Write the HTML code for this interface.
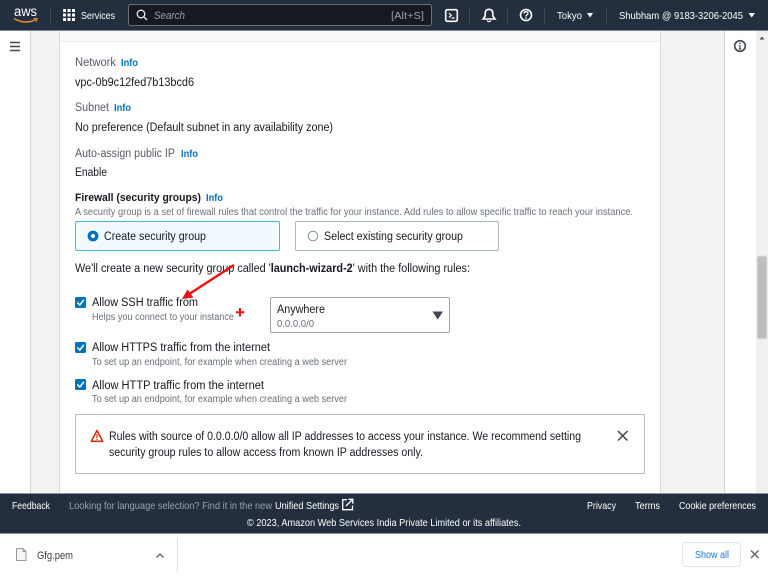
<!DOCTYPE html>
<html lang="en"><head><meta charset="utf-8"><title>EC2 Launch</title>
<style>
html,body{margin:0;padding:0;width:768px;height:576px;overflow:hidden;background:#fff}
svg{display:block;filter:blur(0.3px)}
text{font-family:"Liberation Sans",sans-serif;font-size:11.500px;fill:#16191f;white-space:pre}
.l{fill:#545b64}
.i{fill:#0073bb;font-weight:bold;font-size:10px}
.s{font-size:10px;fill:#687078}
.w{fill:#fff}
.f{fill:#fff;font-size:10.500px}
</style></head><body>
<svg width="768" height="576" viewBox="0 0 768 576" xmlns="http://www.w3.org/2000/svg">
<!-- page layout -->
<rect x="0" y="31" width="768" height="463" fill="#fff"/>
<rect x="30" y="31" width="30" height="463" fill="#f2f3f3"/>
<rect x="30" y="31" width="1" height="463" fill="#cfd3d3"/>
<rect x="59" y="31" width="1" height="463" fill="#d8dcdc"/>
<rect x="60" y="31" width="600" height="10" fill="#fafafa"/>
<rect x="60" y="41" width="600" height="1" fill="#eaeded"/>
<rect x="660" y="31" width="65" height="463" fill="#f2f3f3"/>
<rect x="660" y="31" width="1" height="463" fill="#d8dcdc"/>
<rect x="724" y="31" width="1" height="463" fill="#cfd3d3"/>
<rect x="756" y="31" width="12" height="463" fill="#f1f1f1"/>
<rect x="757" y="256" width="10" height="83" fill="#bdbdbd" stroke="#e2e2e2"/>
<path d="M759.500 39.500L762 36.500L764.500 39.500Z" fill="#505050"/>
<!-- hamburger -->
<path d="M10 42.500H20M10 46.500H20M10 50.500H20" stroke="#414750" stroke-width="1.500" fill="none"/>
<!-- right info -->
<circle cx="740" cy="46" r="5.300" fill="none" stroke="#414750" stroke-width="1.600"/>
<path d="M740 45.500V49M738.800 49H741.200M739 45.500H740" stroke="#414750" stroke-width="1.200" fill="none"/>
<rect x="739.300" y="42.500" width="1.400" height="1.400" fill="#414750"/>
<!-- top nav -->
<rect x="0" y="0" width="768" height="30" fill="#232f3e"/>
<rect x="0" y="30" width="768" height="1" fill="#7f8689"/>
<text x="14" y="16" textLength="23" lengthAdjust="spacingAndGlyphs" class="w" style="font-size:13.500px">aws</text>
<path d="M14 18.500Q25 25 36 19.500" stroke="#ec912d" stroke-width="1.500" fill="none"/>
<path d="M33.500 18.600L37.200 18.500L36 22" stroke="#ec912d" stroke-width="1" fill="none"/>
<rect x="50" y="6" width="1" height="18" fill="#3a4654"/>
<g fill="#fff">
<rect x="63" y="9" width="3" height="3"/><rect x="67.500" y="9" width="3" height="3"/><rect x="72" y="9" width="3" height="3"/>
<rect x="63" y="13.500" width="3" height="3"/><rect x="67.500" y="13.500" width="3" height="3"/><rect x="72" y="13.500" width="3" height="3"/>
<rect x="63" y="18" width="3" height="3"/><rect x="67.500" y="18" width="3" height="3"/><rect x="72" y="18" width="3" height="3"/>
</g>
<text x="81" y="19" textLength="34" lengthAdjust="spacingAndGlyphs" class="f">Services</text>
<rect x="128.500" y="4.500" width="303" height="21" rx="2" fill="#16191f" stroke="#687078"/>
<circle cx="141" cy="14" r="3.800" fill="none" stroke="#eaeded" stroke-width="1.300"/>
<path d="M144 17L147 20" stroke="#eaeded" stroke-width="1.300"/>
<text x="154" y="19" textLength="31" lengthAdjust="spacingAndGlyphs" style="font-style:italic;fill:#95a5a6;font-size:11px">Search</text>
<text x="391" y="19" textLength="33" lengthAdjust="spacingAndGlyphs" style="fill:#95a5a6;font-size:10.500px">[Alt+S]</text>
<rect x="445.700" y="9.700" width="11.600" height="11.600" rx="1.500" fill="none" stroke="#fff" stroke-width="1.600"/>
<path d="M449 13L451.300 15.200L449 17.400M451.500 18H454.500" stroke="#fff" stroke-width="1.200" fill="none"/>
<rect x="469" y="7" width="1" height="17" fill="#3a4654"/>
<path d="M483 19H495L492.800 16V13.500Q492.800 9.300 489 9.300Q485.200 9.300 485.200 13.500V16Z" fill="none" stroke="#fff" stroke-width="1.600"/>
<path d="M487 20.500Q489 22.800 491 20.500" fill="none" stroke="#fff" stroke-width="1.200"/>
<rect x="507" y="7" width="1" height="17" fill="#3a4654"/>
<circle cx="526" cy="15" r="5.500" fill="none" stroke="#fff" stroke-width="1.600"/>
<path d="M524 13.500Q524 11.700 526 11.700Q528 11.700 528 13.300Q528 14.300 526.800 14.900Q526 15.300 526 16.500" fill="none" stroke="#fff" stroke-width="1.300"/>
<rect x="525.300" y="17.300" width="1.400" height="1.400" fill="#fff"/>
<rect x="544" y="7" width="1" height="17" fill="#3a4654"/>
<text x="557" y="19" textLength="25" lengthAdjust="spacingAndGlyphs" class="f">Tokyo</text>
<path d="M587 13H593L590 17.500Z" fill="#fff"/>
<rect x="606" y="7" width="1" height="17" fill="#3a4654"/>
<text x="619" y="19" textLength="124" lengthAdjust="spacingAndGlyphs" class="f">Shubham @ 9183-3206-2045</text>
<path d="M748.500 13H755L751.700 17.500Z" fill="#fff"/>
<!-- details -->
<text x="75" y="66" textLength="41" lengthAdjust="spacingAndGlyphs" class="l">Network</text>
<text x="121" y="66" textLength="17" lengthAdjust="spacingAndGlyphs" class="i">Info</text>
<text x="75" y="86" textLength="119" lengthAdjust="spacingAndGlyphs">vpc-0b9c12fed7b13bcd6</text>
<text x="75" y="111" textLength="34" lengthAdjust="spacingAndGlyphs" class="l">Subnet</text>
<text x="114" y="111" textLength="17" lengthAdjust="spacingAndGlyphs" class="i">Info</text>
<text x="75" y="131" textLength="258" lengthAdjust="spacingAndGlyphs">No preference (Default subnet in any availability zone)</text>
<text x="75" y="157" textLength="100" lengthAdjust="spacingAndGlyphs" class="l">Auto-assign public IP</text>
<text x="181" y="157" textLength="17" lengthAdjust="spacingAndGlyphs" class="i">Info</text>
<text x="75" y="176" textLength="32" lengthAdjust="spacingAndGlyphs">Enable</text>
<text x="75" y="201" textLength="126" lengthAdjust="spacingAndGlyphs" style="font-weight:bold;font-size:11px">Firewall (security groups)</text>
<text x="206" y="201" textLength="17" lengthAdjust="spacingAndGlyphs" class="i">Info</text>
<text x="75" y="215" textLength="558" lengthAdjust="spacingAndGlyphs" class="s">A security group is a set of firewall rules that control the traffic for your instance. Add rules to allow specific traffic to reach your instance.</text>
<rect x="75.500" y="221.500" width="204" height="29" rx="1.500" fill="#f1faff" stroke="#44b9d6"/>
<circle cx="93" cy="236" r="3.700" fill="#fff" stroke="#0073bb" stroke-width="3.400"/>
<text x="104" y="240" textLength="102" lengthAdjust="spacingAndGlyphs">Create security group</text>
<rect x="295.500" y="221.500" width="203" height="29" rx="1.500" fill="#fff" stroke="#aab7b8"/>
<circle cx="313" cy="236" r="4.800" fill="#fff" stroke="#879596"/>
<text x="324" y="240" textLength="139" lengthAdjust="spacingAndGlyphs">Select existing security group</text>
<text x="75" y="272" textLength="395" lengthAdjust="spacingAndGlyphs">We'll create a new security group called '<tspan style="font-weight:bold">launch-wizard-2</tspan>' with the following rules:</text>
<!-- checkboxes -->
<rect x="75" y="297" width="11" height="11" rx="1.500" fill="#0073bb"/>
<path d="M77.300 302.500L79.800 305L83.800 299.800" stroke="#fff" stroke-width="1.500" fill="none"/>
<text x="92" y="306" textLength="106" lengthAdjust="spacingAndGlyphs">Allow SSH traffic from</text>
<text x="92" y="320" textLength="142" lengthAdjust="spacingAndGlyphs" class="s">Helps you connect to your instance</text>
<rect x="75" y="342" width="11" height="11" rx="1.500" fill="#0073bb"/>
<path d="M77.300 347.500L79.800 350L83.800 344.800" stroke="#fff" stroke-width="1.500" fill="none"/>
<text x="92" y="351" textLength="178" lengthAdjust="spacingAndGlyphs">Allow HTTPS traffic from the internet</text>
<text x="92" y="365" textLength="255" lengthAdjust="spacingAndGlyphs" class="s">To set up an endpoint, for example when creating a web server</text>
<rect x="75" y="379" width="11" height="11" rx="1.500" fill="#0073bb"/>
<path d="M77.300 384.500L79.800 387L83.800 381.800" stroke="#fff" stroke-width="1.500" fill="none"/>
<text x="92" y="389" textLength="172" lengthAdjust="spacingAndGlyphs">Allow HTTP traffic from the internet</text>
<text x="92" y="402" textLength="255" lengthAdjust="spacingAndGlyphs" class="s">To set up an endpoint, for example when creating a web server</text>
<!-- select -->
<rect x="270.500" y="297.500" width="179" height="35" rx="1.500" fill="#fff" stroke="#9aa5a6"/>
<text x="277" y="313" textLength="48" lengthAdjust="spacingAndGlyphs">Anywhere</text>
<text x="277" y="327" textLength="37" lengthAdjust="spacingAndGlyphs" class="s">0.0.0.0/0</text>
<path d="M432.500 311.500H443L437.700 319.500Z" fill="#414750"/>
<!-- annotations -->
<path d="M234 265L190 293.500" stroke="#ee1111" stroke-width="2.500" fill="none"/>
<path d="M182 299L187.500 289.500L193.500 297.500Z" fill="#ee1111"/>
<path d="M240 308V316.500M236 312.300H244.500" stroke="#ee1111" stroke-width="2" fill="none"/>
<!-- alert -->
<rect x="75.500" y="414.500" width="569" height="59" rx="1" fill="#fff" stroke="#b4c0c1"/>
<path d="M97 430.500L102.700 441.300H91.300Z" fill="#fff" stroke="#d13212" stroke-width="1.600" stroke-linejoin="round"/>
<path d="M97 434V438M97 438.800V440" stroke="#d13212" stroke-width="1.200"/>
<text x="109" y="440" textLength="472" lengthAdjust="spacingAndGlyphs">Rules with source of 0.0.0.0/0 allow all IP addresses to access your instance. We recommend setting</text>
<text x="109" y="456" textLength="314" lengthAdjust="spacingAndGlyphs">security group rules to allow access from known IP addresses only.</text>
<path d="M618 431L627.500 440.500M627.500 431L618 440.500" stroke="#414750" stroke-width="1.500"/>
<!-- footer -->
<rect x="0" y="493" width="768" height="41" fill="#232f3e"/>
<rect x="0" y="493" width="768" height="1" fill="#879596"/>
<rect x="0" y="533" width="768" height="1" fill="#8d9399"/>
<text x="12" y="509" textLength="38" lengthAdjust="spacingAndGlyphs" class="f">Feedback</text>
<text x="69" y="509" textLength="203" lengthAdjust="spacingAndGlyphs" style="font-size:10.500px;fill:#95a5a6">Looking for language selection? Find it in the new</text>
<text x="275" y="509" textLength="64" lengthAdjust="spacingAndGlyphs" class="f">Unified Settings</text>
<path d="M347 499.700H342.700V509.700H352.500V505.500" fill="none" stroke="#fff" stroke-width="1.300"/>
<path d="M346 506L352.500 499.500M348.500 499.300H352.800V503.600" fill="none" stroke="#fff" stroke-width="1.400"/>
<text x="247" y="526" textLength="274" lengthAdjust="spacingAndGlyphs" class="f">© 2023, Amazon Web Services India Private Limited or its affiliates.</text>
<text x="587" y="509" textLength="29" lengthAdjust="spacingAndGlyphs" class="f">Privacy</text>
<text x="635" y="509" textLength="25" lengthAdjust="spacingAndGlyphs" class="f">Terms</text>
<text x="679" y="509" textLength="77" lengthAdjust="spacingAndGlyphs" class="f">Cookie preferences</text>
<!-- download bar -->
<rect x="0" y="534" width="768" height="42" fill="#fff"/>
<path d="M16.500 548.500H23L26 551.500V560.500H16.500Z" fill="#f5f5f5" stroke="#9a9a9a"/>
<path d="M23 548.500V551.500H26" fill="none" stroke="#9a9a9a"/>
<text x="37" y="559" textLength="36" lengthAdjust="spacingAndGlyphs" style="fill:#3c4043;font-size:11px">Gfg.pem</text>
<path d="M156.500 557.500L160 554L163.500 557.500" fill="none" stroke="#5f6368" stroke-width="1.300"/>
<rect x="177" y="538" width="1" height="33" fill="#dadce0"/>
<rect x="682.500" y="542.500" width="58" height="24" rx="3" fill="#fff" stroke="#e3e5e8"/>
<text x="695" y="558" textLength="34" lengthAdjust="spacingAndGlyphs" style="fill:#1a73e8;font-size:10.500px">Show all</text>
<path d="M751 550.500L758.500 558M758.500 550.500L751 558" stroke="#5f6368" stroke-width="1.400"/>
</svg>
</body></html>
